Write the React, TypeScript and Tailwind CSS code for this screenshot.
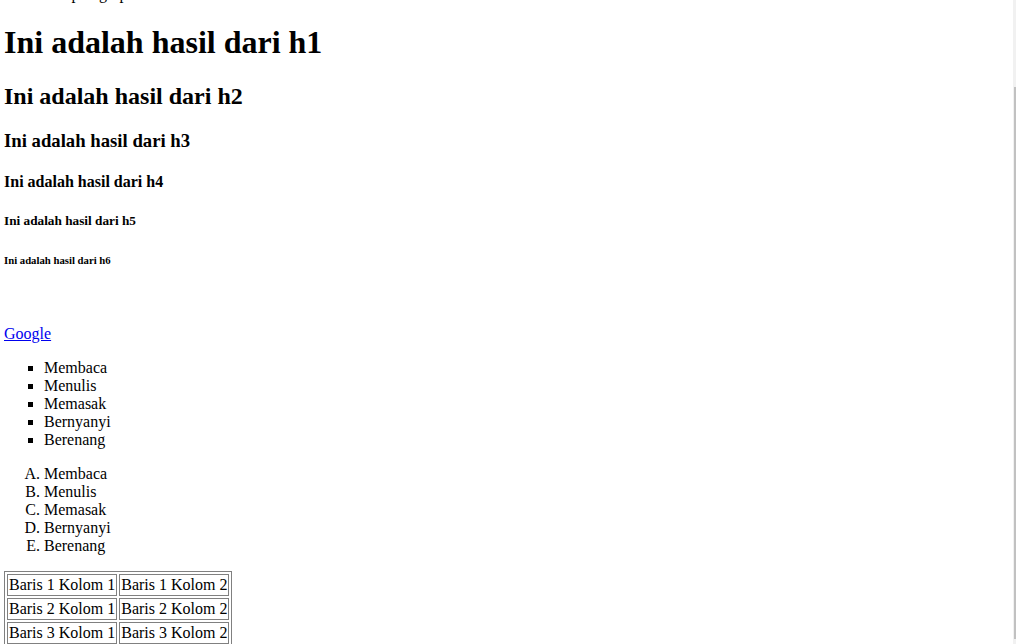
import React from "react";

export default function App() {
  const items = ["Membaca", "Menulis", "Memasak", "Bernyanyi", "Berenang"];
  const rows = [1, 2, 3];
  return (
    <div className="flex h-[644px] w-[1016px] overflow-hidden bg-white font-['Liberation_Serif','Times_New_Roman',serif] text-[16px] leading-[normal] text-black">
      <div className="flex-1 overflow-hidden">
        <div className="-mt-[31px] flow-root px-1">
          <p className="my-4">Ini adalah paragraph</p>
          <h1 className="my-[21.44px] text-[32px] font-bold">Ini adalah hasil dari h1</h1>
          <h2 className="my-[19.92px] text-[24px] font-bold">Ini adalah hasil dari h2</h2>
          <h3 className="my-[18.72px] text-[18.72px] font-bold">Ini adalah hasil dari h3</h3>
          <h4 className="my-[21.28px] text-[16px] font-bold">Ini adalah hasil dari h4</h4>
          <h5 className="my-[22.18px] text-[13.28px] font-bold">Ini adalah hasil dari h5</h5>
          <h6 className="my-[24.98px] text-[10.72px] font-bold">Ini adalah hasil dari h6</h6>
          <div className="h-[18px]" />
          <p className="my-4">
            <a href="#" className="text-[#0000ee] underline">Google</a>
          </p>
          <ul className="my-4 list-[square] pl-10">
            {items.map((t) => (
              <li key={t}>{t}</li>
            ))}
          </ul>
          <ol className="my-4 list-[upper-alpha] pl-10">
            {items.map((t) => (
              <li key={t}>{t}</li>
            ))}
          </ol>
          <table className="border-separate border-spacing-[2px] border border-[#808080]">
            <tbody>
              {rows.map((r) => (
                <tr key={r}>
                  <td className="border border-[#808080] p-px">Baris {r} Kolom 1</td>
                  <td className="border border-[#808080] p-px">Baris {r} Kolom 2</td>
                </tr>
              ))}
            </tbody>
          </table>
        </div>
      </div>
      <div className="flex w-[3px] flex-col bg-[#f1f1f1]">
        <div className="ml-auto mt-[87px] h-[552px] w-[2px] bg-[#c1c1c1]" />
      </div>
    </div>
  );
}
